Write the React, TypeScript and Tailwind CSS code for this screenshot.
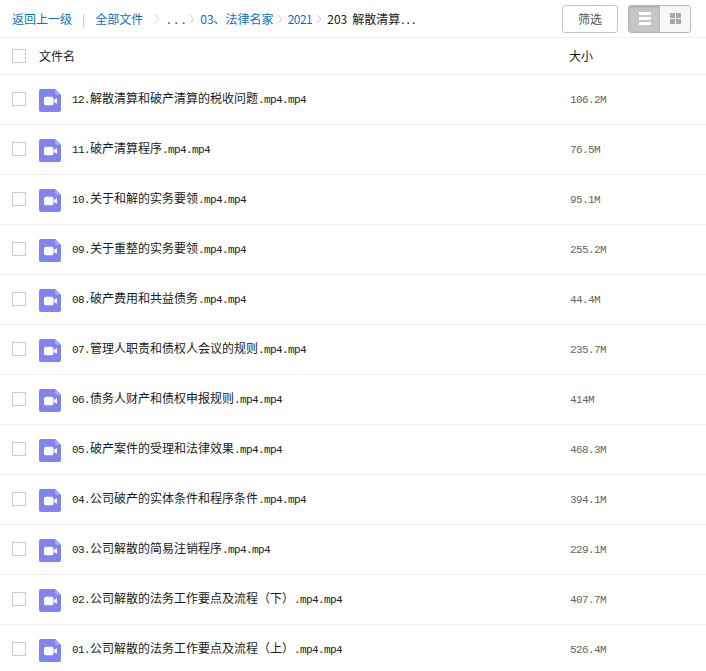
import { ChevronRight } from 'lucide-react'

const files = [
  { name: '12.解散清算和破产清算的税收问题.mp4.mp4', size: '106.2M' },
  { name: '11.破产清算程序.mp4.mp4', size: '76.5M' },
  { name: '10.关于和解的实务要领.mp4.mp4', size: '95.1M' },
  { name: '09.关于重整的实务要领.mp4.mp4', size: '255.2M' },
  { name: '08.破产费用和共益债务.mp4.mp4', size: '44.4M' },
  { name: '07.管理人职责和债权人会议的规则.mp4.mp4', size: '235.7M' },
  { name: '06.债务人财产和债权申报规则.mp4.mp4', size: '414M' },
  { name: '05.破产案件的受理和法律效果.mp4.mp4', size: '468.3M' },
  { name: '04.公司破产的实体条件和程序条件.mp4.mp4', size: '394.1M' },
  { name: '03.公司解散的简易注销程序.mp4.mp4', size: '229.1M' },
  { name: '02.公司解散的法务工作要点及流程（下）.mp4.mp4', size: '407.7M' },
  { name: '01.公司解散的法务工作要点及流程（上）.mp4.mp4', size: '526.4M' },
]

// latin runs sit on a 6px grid next to the 12px CJK glyphs
function MonoText({ text }: { text: string }) {
  const runs = text.match(/[\x00-\x7f]+|[^\x00-\x7f]+/g) ?? []
  return (
    <>
      {runs.map((run, i) =>
        /^[\x00-\x7f]/.test(run) ? (
          <span key={i} className="font-['Liberation_Mono',monospace] text-[11px] tracking-[-0.6px]">
            {run}
          </span>
        ) : (
          <span key={i}>{run}</span>
        )
      )}
    </>
  )
}

function Checkbox({ className = '' }: { className?: string }) {
  return <div className={`w-[14px] h-[14px] border border-[#cccccc] bg-white shrink-0 ${className}`} />
}

function VideoIcon() {
  return (
    <svg width="22" height="23" viewBox="0 0 22 24" preserveAspectRatio="none" className="block">
      <path d="M2 0H16L22 6V22a2 2 0 0 1-2 2H2a2 2 0 0 1-2-2V2a2 2 0 0 1 2-2z" fill="#8183f1" />
      <path d="M16 0L22 6H18a2 2 0 0 1-2-2z" fill="#a8a9f6" />
      <rect x="5" y="8" width="9.5" height="9" rx="2" fill="#fff" />
      <path d="M15 11.5L18 9.5V15.5L15 13.5z" fill="#fff" />
    </svg>
  )
}

function Chevron({ className = '' }: { className?: string }) {
  return <ChevronRight className={`w-4 h-4 text-[#b5b5b5] shrink-0 ${className}`} strokeWidth={1} />
}

export default function App() {
  return (
    <div className="w-[706px] h-[671px] overflow-hidden bg-white font-['Noto_Sans_CJK_SC','Liberation_Sans',sans-serif] text-[12px] text-[#1a1a1a]">
      {/* Breadcrumb bar */}
      <div className="h-[38px] flex items-center border-b border-[#f0f0f0] pl-[12px] pr-[15px]">
        <span className="text-[#0a6fc2]">返回上一级</span>
        <span className="text-[#b5b5b5] mx-[10px]">|</span>
        <span className="text-[#0a6fc2]">全部文件</span>
        <div className="flex items-center ml-[6px] whitespace-nowrap">
          <Chevron />
          <span className="text-[#444444] tracking-[4px] ml-[2px] -mr-[5px]">...</span>
          <Chevron />
          <span className="text-[#0a6fc2]">03、法律名家</span>
          <Chevron className="-ml-[2px]" />
          <span className="text-[#0a6fc2] tracking-[-0.5px]">2021</span>
          <Chevron className="-ml-[1px]" />
          <span>
            203<span className="ml-[5px]" />解散清算<span className="tracking-[2px] ml-[1px]">...</span>
          </span>
        </div>
        <button className="ml-auto w-[56px] h-[28px] border border-[#c4c4c4] rounded-[3px] text-[#555555] bg-white">
          筛选
        </button>
        <div className="ml-[10px] w-[63px] h-[28px] border border-[#b8b8b8] rounded-[3px] flex overflow-hidden">
          <div className="w-[31px] bg-[#c6c6c6] flex items-center justify-center shadow-[inset_0_1px_2px_rgba(0,0,0,0.2)]">
            <div className="w-[12px] h-[13px] flex flex-col justify-between">
              <div className="h-[3px] bg-white" />
              <div className="h-[3px] bg-white" />
              <div className="h-[3px] bg-white" />
            </div>
          </div>
          <div className="flex-1 bg-[#f7f7f7] flex items-center justify-center">
            <div className="w-[11px] h-[11px] grid grid-cols-2 gap-[1px]">
              <div className="bg-[#a8a8a8]" />
              <div className="bg-[#a8a8a8]" />
              <div className="bg-[#a8a8a8]" />
              <div className="bg-[#a8a8a8]" />
            </div>
          </div>
        </div>
      </div>

      {/* Column header */}
      <div className="h-[37px] flex items-center border-b border-[#f0f0f0] pl-[12px]">
        <Checkbox />
        <span className="ml-[13px] w-[530px]">文件名</span>
        <span>大小</span>
      </div>

      {/* Files */}
      {files.map((file) => (
        <div key={file.name} className="h-[50px] flex items-center border-b border-[#f0f0f0] pl-[12px]">
          <Checkbox className="-mt-[1px]" />
          <div className="ml-[13px] mt-[2px] shrink-0">
            <VideoIcon />
          </div>
          <span className="ml-[11px] w-[498px] whitespace-nowrap -mt-[2px]">
            <MonoText text={file.name} />
          </span>
          <span className="text-[#666666] -mt-[2px]">
            <MonoText text={file.size} />
          </span>
        </div>
      ))}
    </div>
  )
}
